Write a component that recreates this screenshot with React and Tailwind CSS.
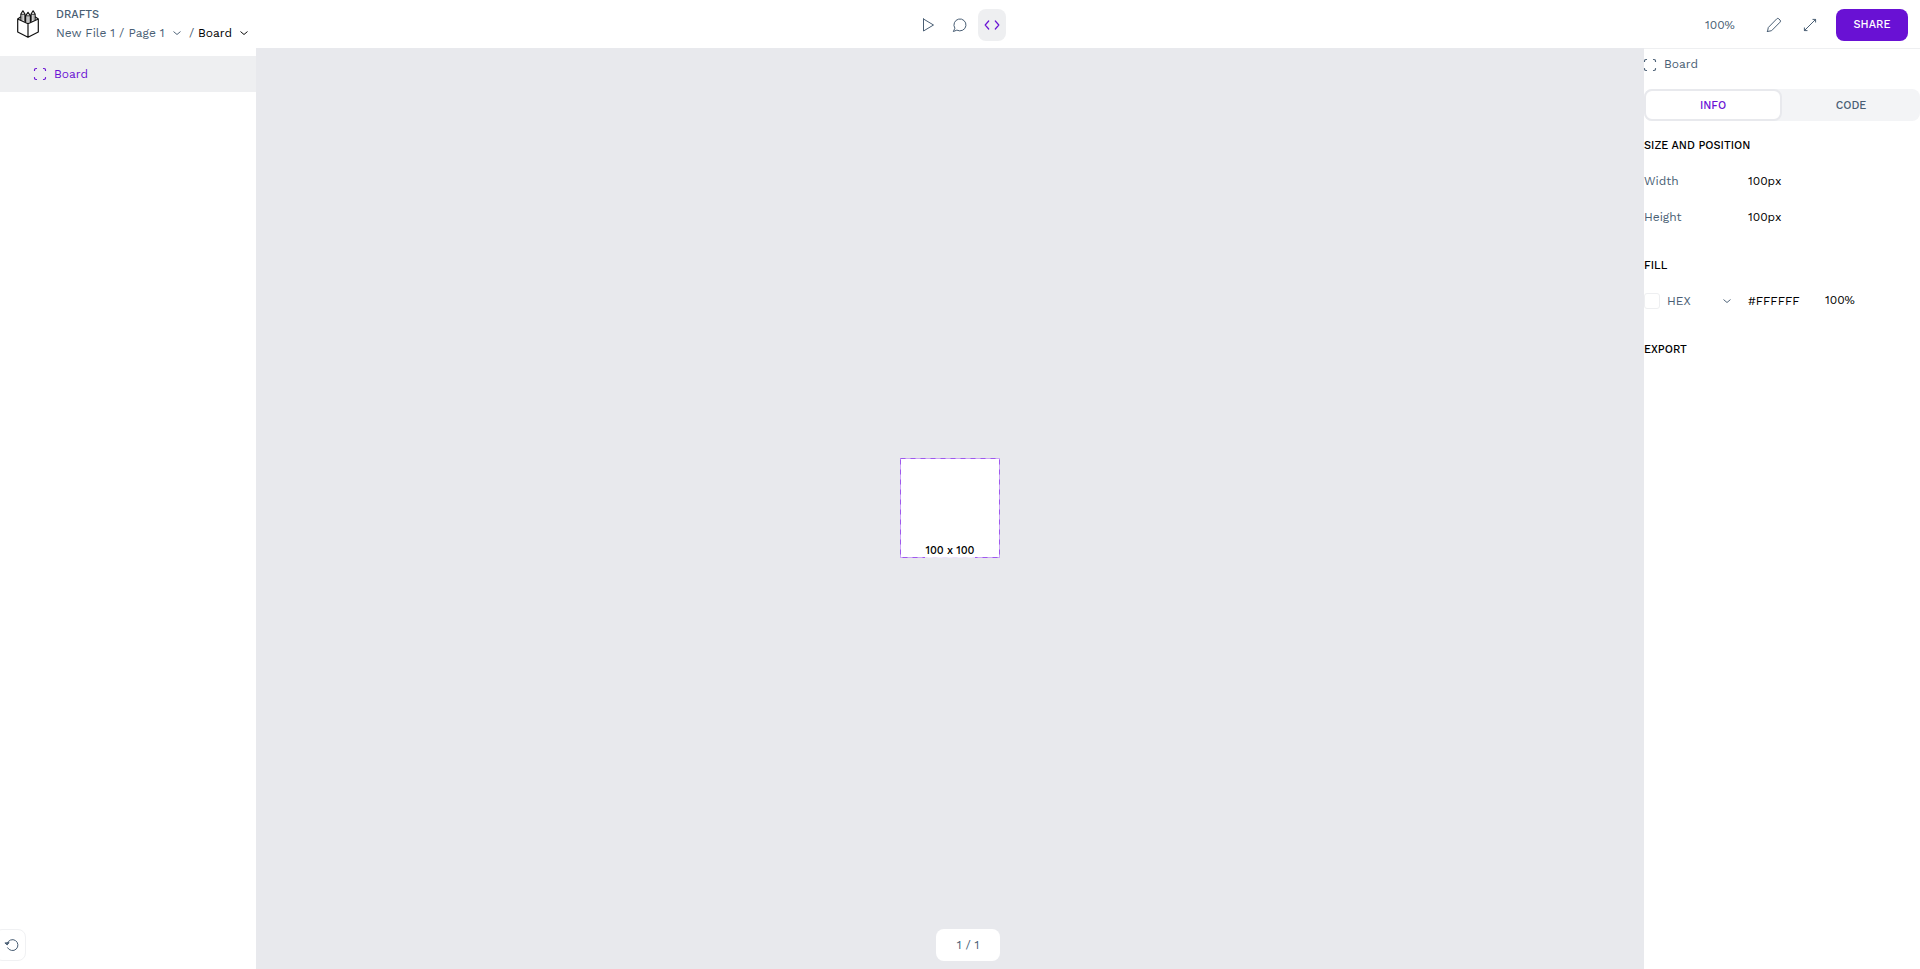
import React from "react";

function Icon({ className = "", children, size = 16 }) {
  return (
    <svg
      width={size}
      height={size}
      viewBox="0 0 16 16"
      fill="none"
      stroke="currentColor"
      strokeLinecap="round"
      strokeLinejoin="round"
      className={"block shrink-0 " + className}
    >
      {children}
    </svg>
  );
}

const Chevron = ({ className }) => (
  <Icon className={className}>
    <path d="M4.800 6.800 8 9.500 11.200 6.800" strokeWidth="0.95" />
  </Icon>
);

const BoardIcon = ({ className }) => (
  <Icon className={className}>
    <path
      d="M2.500 4.500V4A1.500 1.500 0 0 1 4 2.500h.5M11.500 2.500h.5A1.500 1.500 0 0 1 13.500 4v.5M13.500 11.500v.5a1.500 1.500 0 0 1-1.500 1.500h-.5M4.500 13.500H4A1.500 1.500 0 0 1 2.500 12v-.5"
      strokeWidth="1.2"
    />
  </Icon>
);

function Logo() {
  return (
    <svg width="24" height="30" viewBox="0 0 24 30" fill="none" stroke="#111" strokeWidth="1.2" strokeLinejoin="round" className="block shrink-0">
      <path d="M1.700 10v13L12 28.300 22.300 23V10L12 14.800 1.700 10ZM12 14.800v13.500" />
      <path d="M1.700 10 4.900 7.800M22.300 10l-3.200-2.200" />
      <path d="M4.900 11.300V5L6.900 1.800 8.900 5v7.800M15.100 12.800V5l2-3.200 2 3.200v6.300M9.800 13.300V6.500L12 3.300l2.200 3.200v6.800" />
      <path d="M4.900 5.300h4M15.100 5.300h4M9.800 6.800h4.400" strokeWidth="0.8" />
      <path d="M6.900 5.300v6.200M17.100 5.300v6.200M12 6.800v7.500" strokeWidth="0.5" />
    </svg>
  );
}

function Heading({ children, className }) {
  return <h2 className={"flex items-center whitespace-nowrap pt-0.5 text-[11px] font-medium text-black " + className}>{children}</h2>;
}

function Property({ name, value }) {
  return (
    <div className="flex h-9 items-center">
      <span className="w-[104px]">{name}</span>
      <span className="text-black">{value}</span>
    </div>
  );
}

export default function App() {
  return (
    <div className="flex h-[969px] w-full flex-col overflow-hidden bg-white font-['Work_Sans','Inter',sans-serif] text-xs text-[#495e74] [font-feature-settings:'calt'_0]">
      <header className="flex h-12 shrink-0">
        <div className="flex w-[914px] shrink-0 pl-4">
          <div className="pt-[9px]">
            <Logo />
          </div>
          <div className="flex flex-col pl-4 pt-1.5">
            <span className="h-4 text-[11px] font-medium leading-[17px]">DRAFTS</span>
            <div className="flex h-[21px] items-center whitespace-nowrap">
              <span className="w-[113px]">New File 1 / Page 1</span>
              <Chevron />
              <span className="ml-[4px] w-[9px]">/</span>
              <span className="w-[38px] text-black">Board</span>
              <Chevron className="text-black" />
            </div>
          </div>
        </div>
        <nav className="flex items-center gap-1 pt-0.5">
          <button className="flex h-8 w-7 items-center justify-center">
            <Icon>
              <path d="M3.500 2v12L13.500 8 3.500 2Z" />
            </Icon>
          </button>
          <button className="flex h-8 w-7 items-center justify-center">
            <Icon>
              <path d="M1.500 14.200 2.900 11.200A6 6 0 1 1 5.200 13.300Z" />
            </Icon>
          </button>
          <button className="flex h-8 w-7 items-center justify-center rounded-lg bg-[#eeeff1] text-[#6911d4]">
            <Icon>
              <path d="M4.700 4 1.200 8l3.500 4M11.300 4l3.500 4-3.500 4" strokeWidth="1.2" />
            </Icon>
          </button>
        </nav>
        <div className="ml-auto mr-3 flex w-[203px] items-center pt-0.5">
          <span className="w-[61px]">100%</span>
          <Icon>
            <path d="M1.500 14.500l.8-4L10.700 1.900a1.500 1.500 0 0 1 2.200 0l1.100 1.100a1.500 1.500 0 0 1 0 2.200L5.600 13.700 1.500 14.500Z" />
          </Icon>
          <Icon className="ml-5">
            <path d="M2.500 13.500l11-11M10.900 2.400h2.700v2.700M2.400 10.900v2.700h2.700" />
          </Icon>
          <button className="ml-[18px] h-8 w-[72px] shrink-0 rounded-lg bg-[#6911d4] text-[11px] font-medium text-white">SHARE</button>
        </div>
      </header>

      <div className="flex min-h-0 flex-1">
        <aside className="flex w-64 shrink-0 flex-col justify-between pt-2">
          <div className="flex h-9 items-center bg-[#eeeff1] pl-8 text-[#6911d4]">
            <BoardIcon />
            <span className="ml-1.5">Board</span>
          </div>
          <button className="-ml-1.5 mb-2 flex h-8 w-8 items-center justify-center rounded-lg border border-[#f0f1f3] pl-1">
            <Icon>
              <path d="M3.200 6.300A5.500 5.500 0 1 1 3.600 10.800" />
              <path d="M1.200 6.200l2 1.700 1.600-2Z" fill="currentColor" />
            </Icon>
          </button>
        </aside>

        <main className="flex flex-1 flex-col items-center bg-[#e8e9ed]">
          <div className="relative mt-[410px] flex h-[100px] w-[100px] items-end justify-center bg-white">
            <svg width="100" height="100" className="absolute inset-0" fill="none">
              <rect x="0.500" y="0.500" width="99" height="99" stroke="#cda9f5" />
              <rect x="0.500" y="0.500" width="99" height="99" stroke="#9f59ee" strokeDasharray="5 5" />
            </svg>
            <span className="relative flex h-4 w-[50px] items-center justify-center whitespace-nowrap bg-white/80 pt-0.5 text-[11px] font-medium text-black">100 x 100</span>
          </div>
          <div className="ml-9 mb-2 mt-auto flex h-8 w-16 items-center justify-center rounded-lg bg-white">1 / 1</div>
        </main>

        <aside className="w-[276px] shrink-0 border-t border-[#eeeff1]">
          <div className="flex h-10 pt-2">
            <BoardIcon className="-ml-0.5" />
            <span className="ml-1.5 h-4 leading-[14px]">Board</span>
          </div>
          <div className="flex h-8 rounded-lg bg-[#f3f4f6] text-[11px] font-medium">
            <button className="w-[138px] rounded-lg border-2 border-[#e8e9ed] bg-white pt-0.5 text-[#6911d4]">INFO</button>
            <button className="w-[138px] pt-0.5">CODE</button>
          </div>
          <Heading className="h-12">SIZE AND POSITION</Heading>
          <div className="-mt-1.5">
            <Property name="Width" value="100px" />
            <Property name="Height" value="100px" />
          </div>
          <Heading className="mt-1.5 h-12">FILL</Heading>
          <div className="-mt-1.5 flex h-9 items-center">
            <span className="h-4 w-4 rounded-[3px] border border-[#eeeff1] bg-white" />
            <span className="ml-[7px] w-[52px]">HEX</span>
            <Chevron />
            <span className="ml-[13px] w-[77px] text-black">#FFFFFF</span>
            <span className="pb-0.5 text-black">100%</span>
          </div>
          <Heading className="mt-1.5 h-12">EXPORT</Heading>
        </aside>
      </div>
    </div>
  );
}
